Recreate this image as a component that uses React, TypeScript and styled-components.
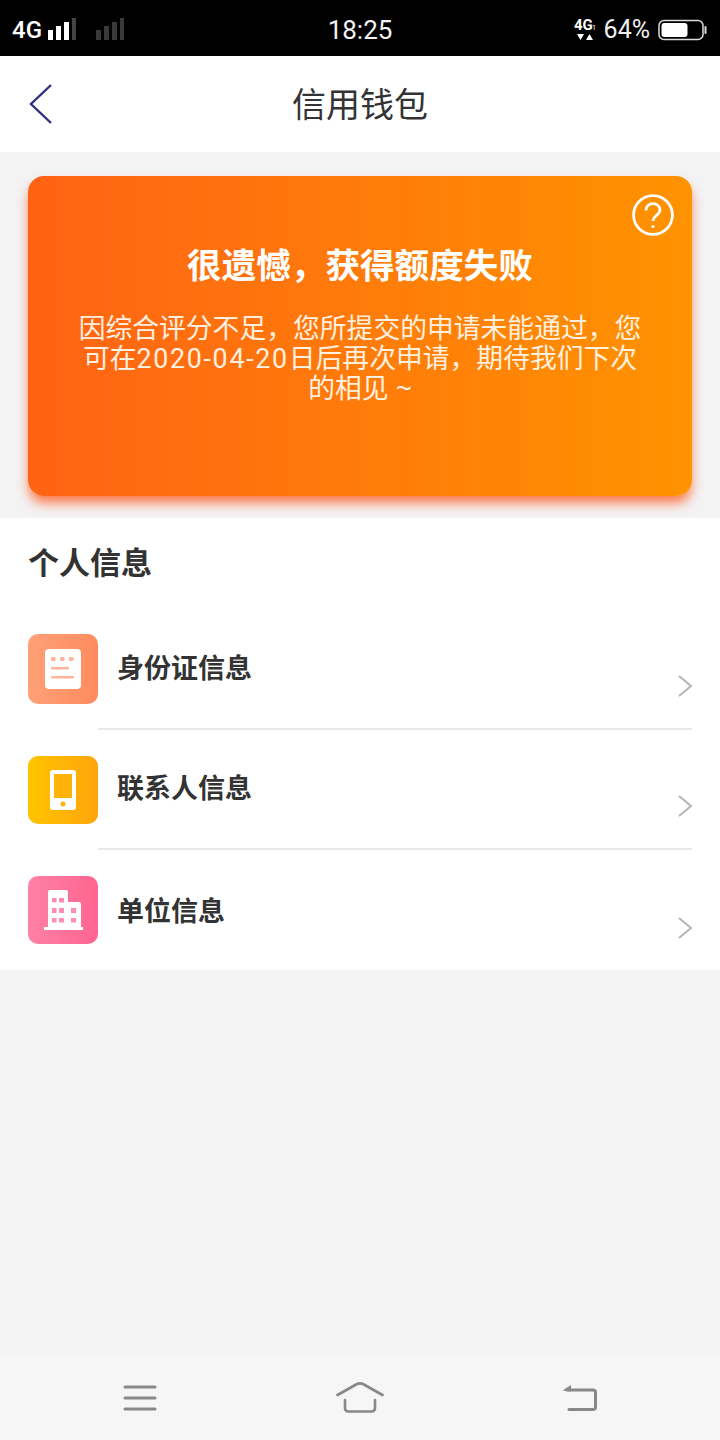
import React from "react";
import styled, { createGlobalStyle } from "styled-components";

const Global = createGlobalStyle`
  html, body { margin: 0; padding: 0; background: #f3f3f3; }
  * { box-sizing: border-box; }
  body { font-family: "Liberation Sans", "Noto Sans CJK SC", sans-serif; }
`;

const Screen = styled.div`
  width: 720px;
  height: 1440px;
  display: flex;
  flex-direction: column;
  background: #f3f3f3;
  overflow: hidden;
`;

const StatusBar = styled.div`
  height: 56px;
  flex: none;
  background: #000;
  color: #fff;
  display: grid;
  grid-template-columns: 1fr auto 1fr;
  align-items: center;
  padding: 3px 12px 0 12px;
`;

const StatusLeft = styled.div`
  display: flex;
  align-items: center;
`;

const StatusRight = styled.div`
  display: flex;
  align-items: center;
  justify-content: flex-end;
`;

const NetLabel = styled.span`
  font-family: "Roboto", sans-serif;
  font-size: 24px;
  font-weight: 500;
  margin-right: 6px;
`;

const SignalGap = styled.div`
  width: 18px;
`;

const Clock = styled.span`
  font-family: "Roboto", sans-serif;
  font-size: 26px;
  color: #f4f4f4;
`;

const Percent = styled.span`
  font-family: "Roboto", sans-serif;
  font-size: 25px;
  color: #f0f0f0;
  margin: 0 8px 0 8px;
`;

const TitleBar = styled.header`
  height: 96px;
  flex: none;
  background: #fff;
  display: flex;
  align-items: center;
  justify-content: center;
  padding-top: 2px;
  position: relative;
`;

const BackButton = styled.div`
  position: absolute;
  left: 28px;
  top: 26px;
  display: flex;
`;

const Title = styled.h1`
  margin: 0;
  font-size: 34px;
  font-weight: 400;
  color: #333;
  line-height: 1;
`;

const BannerWrap = styled.div`
  height: 366px;
  flex: none;
  padding: 24px 28px 0;
`;

const Banner = styled.section`
  height: 320px;
  border-radius: 16px;
  background: linear-gradient(90deg, #ff6314 0%, #ff9300 100%);
  box-shadow: 0 8px 12px -1px rgba(255, 80, 20, 0.75);
  color: #fff;
  text-align: center;
  padding: 68px 44px 0;
  position: relative;
`;

const HelpIcon = styled.div`
  position: absolute;
  right: 18px;
  top: 18px;
  display: flex;
`;

const BannerTitle = styled.h2`
  margin: 0;
  font-size: 34.6px;
  font-weight: 700;
  line-height: 44px;
`;

const BannerText = styled.p`
  margin: 26px 0 0;
  font-size: 26.8px;
  line-height: 30px;
  color: #fff0e0;
`;

const DateText = styled.span`
  font-family: "Roboto", sans-serif;
  letter-spacing: 1.7px;
`;

const InfoPanel = styled.section`
  height: 452px;
  flex: none;
  background: #fff;
  padding-left: 28px;
  display: flex;
  flex-direction: column;
`;

const PanelHeading = styled.h3`
  margin: 0;
  height: 116px;
  padding-top: 28px;
  font-size: 31px;
  font-weight: 700;
  line-height: 36px;
  color: #333;
`;

const Row = styled.div<{ $height: number }>`
  height: ${(p) => p.$height}px;
  display: flex;
  align-items: flex-start;
`;

const IconTile = styled.div<{ $from: string; $to: string; $h: number; $top: number }>`
  width: 70px;
  height: ${(p) => p.$h}px;
  margin-top: ${(p) => p.$top}px;
  flex: none;
  border-radius: 10px;
  background: linear-gradient(90deg, ${(p) => p.$from}, ${(p) => p.$to});
  display: flex;
  align-items: center;
  justify-content: center;
`;

const RowBody = styled.div<{ $divider: boolean }>`
  flex: 1;
  height: 100%;
  margin-right: 28px;
  padding-left: 19px;
  display: flex;
  justify-content: space-between;
  border-bottom: ${(p) => (p.$divider ? "2px solid #e8e8e8" : "none")};
`;

const RowLabel = styled.span<{ $top: number }>`
  font-size: 27px;
  font-weight: 700;
  line-height: 34px;
  color: #333;
  margin-top: ${(p) => p.$top}px;
`;

const RowChevron = styled.div<{ $top: number }>`
  display: flex;
  margin-top: ${(p) => p.$top}px;
  margin-right: -1px;
`;

const Spacer = styled.div`
  flex: 1;
`;

const NavBar = styled.nav`
  height: 84px;
  flex: none;
  background: #f6f6f6;
  display: grid;
  grid-template-columns: repeat(3, 1fr);
  align-items: center;
  justify-items: center;
  padding: 0 30px;
`;

const NavSlot = styled.div`
  display: flex;
`;

const SignalBars = ({ color }: { color: string }) => (
  <svg width="30" height="24" viewBox="0 0 30 24">
    <rect x="0" y="12" width="5" height="10" fill={color} />
    <rect x="8" y="8" width="5" height="14" fill={color} />
    <rect x="16" y="4" width="5" height="18" fill={color} />
    <rect x="24" y="0" width="4" height="22" fill={color === "#fff" ? "#444" : color} />
  </svg>
);

const Chevron = () => (
  <svg width="16" height="24" viewBox="0 0 16 24" fill="none" stroke="#b4b4b4" strokeWidth="2">
    <path d="M2 2 L14 12 L2 22" />
  </svg>
);

const rows = [
  {
    label: "身份证信息",
    from: "#ffa077",
    to: "#ff8b5f",
    height: 96,
    tile: 70,
    tileTop: 0,
    labelTop: 18,
    chevronTop: 40,
    icon: (
      <svg width="36" height="40" viewBox="0 0 36 40">
        <rect x="0" y="0" width="36" height="40" rx="4" fill="#fff" />
        <g fill="#ffb59a">
          <rect x="6" y="8" width="4.5" height="4" rx="1" />
          <rect x="15" y="8" width="4.5" height="4" rx="1" />
          <rect x="24" y="8" width="4.5" height="4" rx="1" />
          <rect x="6" y="18" width="18" height="2.5" rx="1" />
          <rect x="6" y="27" width="23" height="2.5" rx="1" />
        </g>
      </svg>
    ),
  },
  {
    label: "联系人信息",
    from: "#ffc400",
    to: "#ffa40c",
    height: 120,
    tile: 68,
    tileTop: 26,
    labelTop: 42,
    chevronTop: 64,
    icon: (
      <svg width="26" height="40" viewBox="0 0 26 40">
        <rect x="0" y="0" width="26" height="40" rx="3" fill="#fff" />
        <rect x="4" y="4" width="18" height="24" fill="#ffb208" />
        <circle cx="13" cy="34" r="2.5" fill="#ffb208" />
      </svg>
    ),
  },
  {
    label: "单位信息",
    from: "#ff80a6",
    to: "#ff6590",
    height: 120,
    tile: 68,
    tileTop: 26,
    labelTop: 45,
    chevronTop: 66,
    icon: (
      <svg width="39" height="40" viewBox="0 0 39 40">
        <path d="M4 2 a2 2 0 0 1 2 -2 H22 a2 2 0 0 1 2 2 V12 H35 a2 2 0 0 1 2 2 V37 H39 V40 H0 V37 H4 Z" fill="#fff" />
        <g fill="#ff8fb0">
          <rect x="8" y="8" width="4.5" height="4.5" />
          <rect x="15" y="8" width="5" height="4.5" />
          <rect x="8" y="18" width="4.5" height="5" />
          <rect x="15" y="18" width="5" height="5" />
          <rect x="27" y="18" width="5" height="5" />
          <rect x="8" y="28" width="4.5" height="4.5" />
          <rect x="15" y="28" width="5" height="4.5" />
          <rect x="27" y="28" width="5" height="4.5" />
        </g>
      </svg>
    ),
  },
];

export default function App() {
  return (
    <Screen>
      <Global />
      <StatusBar>
        <StatusLeft>
          <NetLabel>4G</NetLabel>
          <SignalBars color="#fff" />
          <SignalGap />
          <SignalBars color="#3a3a3a" />
        </StatusLeft>
        <Clock>18:25</Clock>
        <StatusRight>
          <svg width="22" height="26" viewBox="0 0 22 26">
            <text x="0" y="13" fill="#fff" fontFamily="Roboto, sans-serif" fontSize="15" fontWeight="700">4G</text>
            <text x="18" y="13" fill="#fff" fontFamily="Roboto, sans-serif" fontSize="7">1</text>
            <path d="M3 17 H10 L6.5 23 Z M12 23 H19 L15.5 17 Z" fill="#fff" />
          </svg>
          <Percent>64%</Percent>
          <svg width="50" height="22" viewBox="0 0 50 22">
            <rect x="1" y="1.5" width="44" height="19" rx="5" fill="none" stroke="#ddd" strokeWidth="1.5" />
            <rect x="3.5" y="4" width="26" height="14" rx="3" fill="#fff" />
            <rect x="46.5" y="7" width="2" height="8" rx="1" fill="#ddd" />
          </svg>
        </StatusRight>
      </StatusBar>

      <TitleBar>
        <BackButton>
          <svg width="26" height="44" viewBox="0 0 26 44" fill="none" stroke="#33307f" strokeWidth="2.4">
            <path d="M23 3 L3 22 L23 41" />
          </svg>
        </BackButton>
        <Title>信用钱包</Title>
      </TitleBar>

      <BannerWrap>
        <Banner>
          <HelpIcon>
            <svg width="42" height="42" viewBox="0 0 42 42" fill="none" stroke="#fff" strokeWidth="2.8">
              <circle cx="21" cy="21" r="19.4" />
              <path d="M14 16.5 C14 7.5 28 7.5 28 16 C28 21 21 21.5 21 27" />
              <circle cx="21" cy="32.5" r="1.6" fill="#fff" stroke="none" />
            </svg>
          </HelpIcon>
          <BannerTitle>很遗憾，获得额度失败</BannerTitle>
          <BannerText>
            因综合评分不足，您所提交的申请未能通过，您可在<DateText>2020-04-20</DateText>日后再次申请，期待我们下次的相见 ~
          </BannerText>
        </Banner>
      </BannerWrap>

      <InfoPanel>
        <PanelHeading>个人信息</PanelHeading>
        {rows.map((r, i) => (
          <Row key={r.label} $height={r.height}>
            <IconTile $from={r.from} $to={r.to} $h={r.tile} $top={r.tileTop}>
              {r.icon}
            </IconTile>
            <RowBody $divider={i < rows.length - 1}>
              <RowLabel $top={r.labelTop}>{r.label}</RowLabel>
              <RowChevron $top={r.chevronTop}>
                <Chevron />
              </RowChevron>
            </RowBody>
          </Row>
        ))}
      </InfoPanel>

      <Spacer />

      <NavBar>
        <NavSlot>
          <svg width="34" height="26" viewBox="0 0 34 26" fill="none" stroke="#888" strokeWidth="3" strokeLinecap="round">
            <path d="M2 2 H32 M2 13 H32 M2 24 H32" />
          </svg>
        </NavSlot>
        <NavSlot>
          <svg width="48" height="32" viewBox="0 0 48 32" fill="none" stroke="#888" strokeWidth="2.6" strokeLinecap="round">
            <path d="M1.5 13 L21 2 Q24 0.8 27 2 L46.5 13" />
            <path d="M9 18 V26 Q9 29.5 12.5 29.5 H35.5 Q39 29.5 39 26 V18" />
          </svg>
        </NavSlot>
        <NavSlot>
          <svg width="36" height="28" viewBox="0 0 36 28" fill="none" stroke="#888" strokeWidth="3" strokeLinecap="round">
            <path d="M5 6 H31 Q33.5 6 33.5 8.5 V23 Q33.5 25.5 31 25.5 H7" />
            <path d="M0.5 6.5 L9 1 V7.5 Z" fill="#888" stroke="none" />
          </svg>
        </NavSlot>
      </NavBar>
    </Screen>
  );
}
